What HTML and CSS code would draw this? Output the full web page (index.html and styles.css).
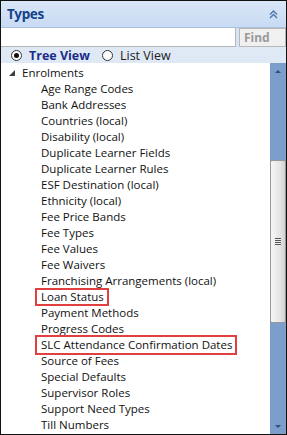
FILE: index.html
```html
<!DOCTYPE html>
<html lang="en">
<head>
    <meta charset="UTF-8">
    <title>Types</title>
    <link rel="stylesheet" href="styles.css">
</head>
<body>
    <div class="panel">
        <!-- header -->
        <div class="panel-header">
            <span class="panel-title">Types</span>
            <svg class="collapse" width="9" height="9" viewBox="0 0 9 9">
                <path d="M1 4.5 L4.5 1 L8 4.5 M1 8 L4.5 4.5 L8 8" fill="none" stroke="#4a79b0" stroke-width="1.4"/>
            </svg>
        </div>

        <!-- search -->
        <div class="search-row">
            <input class="search-input" type="text">
            <button class="find-btn">Find</button>
        </div>

        <!-- view switch -->
        <div class="view-row">
            <label class="view-opt active"><span class="radio checked"></span>Tree View</label>
            <label class="view-opt"><span class="radio"></span>List View</label>
        </div>

        <!-- tree -->
        <div class="tree-area">
            <ul class="tree">
                <li class="node">
                    <svg class="expander" width="6" height="6" viewBox="0 0 6 6"><polygon points="6,0 6,6 0,6" fill="#404040"/></svg>
                    Enrolments
                </li>
                <li class="leaf">Age Range Codes</li>
                <li class="leaf">Bank Addresses</li>
                <li class="leaf">Countries (local)</li>
                <li class="leaf">Disability (local)</li>
                <li class="leaf">Duplicate Learner Fields</li>
                <li class="leaf">Duplicate Learner Rules</li>
                <li class="leaf">ESF Destination (local)</li>
                <li class="leaf">Ethnicity (local)</li>
                <li class="leaf">Fee Price Bands</li>
                <li class="leaf">Fee Types</li>
                <li class="leaf">Fee Values</li>
                <li class="leaf">Fee Waivers</li>
                <li class="leaf">Franchising Arrangements (local)</li>
                <li class="leaf"><span class="mark mark-sm">Loan Status</span></li>
                <li class="leaf">Payment Methods</li>
                <li class="leaf">Progress Codes</li>
                <li class="leaf"><span class="mark">SLC Attendance Confirmation Dates</span></li>
                <li class="leaf">Source of Fees</li>
                <li class="leaf">Special Defaults</li>
                <li class="leaf">Supervisor Roles</li>
                <li class="leaf">Support Need Types</li>
                <li class="leaf">Till Numbers</li>
            </ul>
            <div class="scrollbar">
                <div class="arrow up"></div>
                <div class="track">
                    <div class="thumb"><span class="grip"></span></div>
                </div>
                <div class="arrow down"></div>
            </div>
        </div>
    </div>
</body>
</html>
```

FILE: styles.css
```css
/* general */
body {
    margin: 0;
    font-family: "Open Sans", "Noto Sans", Arial, sans-serif;
    background: #fff;
}

.panel {
    width: 287px;
    height: 435px;
    box-sizing: border-box;
    border: 1px solid #111;
    display: flex;
    flex-direction: column;
    overflow: hidden;
}

/* header */
.panel-header {
    height: 26px;
    flex: none;
    display: flex;
    align-items: center;
    justify-content: space-between;
    padding: 0 8px 0 6px;
    background: linear-gradient(#d9e6f7, #c8dbf3);
    border-bottom: 1px solid #a9bfdc;
}
.panel-title {
    font-family: "Noto Sans", Arial, sans-serif;
    font-weight: 700;
    font-size: 13.5px;
    color: #15428b;
    letter-spacing: -0.3px;
}
.collapse {
    margin-top: 1px;
}

/* search */
.search-row {
    height: 19px;
    flex: none;
    display: flex;
    background: #d6e4f5;
}
.search-input {
    width: 235px;
    height: 19px;
    box-sizing: border-box;
    border: none;
    border-right: 1px solid #b5b5b5;
    border-bottom: 1px solid #b5b5b5;
    margin: 0;
    padding: 0 3px;
    background: #fff;
}
.find-btn {
    margin: 0 0 0 3px;
    flex: 1;
    height: 19px;
    box-sizing: border-box;
    border: 1px solid #b8b8b8;
    background: #f0f0f0;
    color: #9a9a9a;
    font-family: "Noto Sans", Arial, sans-serif;
    font-weight: 700;
    font-size: 12px;
    text-align: left;
    padding: 0 0 0 4px;
}

/* view switch */
.view-row {
    height: 16px;
    flex: none;
    display: flex;
    align-items: center;
    gap: 12px;
    padding-left: 10px;
    background: #dfe9f6;
    font-size: 12.5px;
}
.view-opt {
    display: flex;
    align-items: center;
    gap: 7px;
    color: #222;
}
.view-opt.active {
    font-weight: 700;
    color: #1a2c86;
}
.radio {
    width: 11px;
    height: 11px;
    box-sizing: border-box;
    border: 1px solid #333;
    border-radius: 50%;
    background: #fff;
    display: flex;
    align-items: center;
    justify-content: center;
}
.radio.checked::after {
    content: "";
    width: 5px;
    height: 5px;
    border-radius: 50%;
    background: #111;
}

/* tree */
.tree-area {
    flex: 1;
    display: flex;
    min-height: 0;
}
.tree {
    flex: 1;
    list-style: none;
    margin: 0;
    padding: 2px 0 0 0;
    font-size: 11.5px;
    color: #111;
    overflow: hidden;
}
.tree li {
    height: 16px;
    line-height: 16px;
    white-space: nowrap;
}
.node {
    padding-left: 8px;
    display: flex;
    align-items: center;
    gap: 7px;
}
.leaf {
    padding-left: 40px;
}
.mark {
    position: relative;
}
.mark::after {
    content: "";
    position: absolute;
    left: -6px;
    right: -5px;
    top: -2px;
    bottom: -3px;
    border: 2px solid #e0403f;
}
.mark-sm::after {
    top: -1px;
    bottom: -2px;
}

/* scrollbar */
.scrollbar {
    width: 16px;
    flex: none;
    display: flex;
    flex-direction: column;
    background: #7d9dcb;
}
.arrow {
    height: 16px;
    flex: none;
    display: flex;
    align-items: center;
    justify-content: center;
}
.arrow::after {
    content: "";
    border-left: 3px solid transparent;
    border-right: 3px solid transparent;
}
.arrow.up::after {
    border-bottom: 3px solid #2f4f7f;
}
.arrow.down::after {
    border-top: 3px solid #2f4f7f;
}
.track {
    flex: 1;
    padding-top: 81px;
}
.thumb {
    height: 163px;
    box-sizing: border-box;
    border: 1px solid #989898;
    border-radius: 2px;
    background: linear-gradient(to right, #f6f6f6, #e6e6e6 60%, #d2d2d2);
    display: flex;
    align-items: center;
    justify-content: center;
}
.grip {
    width: 6px;
    height: 7px;
    background: repeating-linear-gradient(#555 0 1px, #eee 1px 2px);
}
```
